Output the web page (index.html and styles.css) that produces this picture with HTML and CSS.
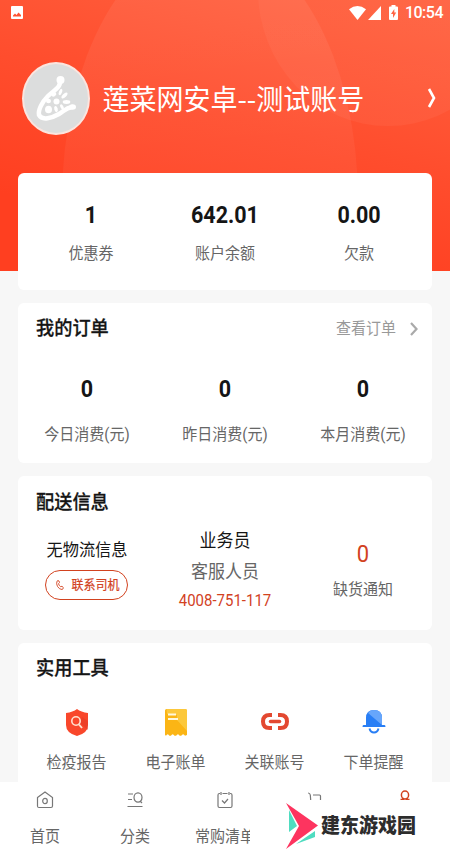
FILE: index.html
```html
<!DOCTYPE html>
<html lang="zh-CN">
<head>
<meta charset="utf-8">
<title>我的</title>
<link rel="stylesheet" href="styles.css">
</head>
<body>
<div class="app">
  <header class="hero">
    <svg class="hero-bg" viewBox="0 0 450 271" preserveAspectRatio="none">
      <defs>
        <linearGradient id="glow" x1="0" y1="0" x2="0" y2="1"><stop offset="0" stop-color="#fff" stop-opacity=".07"/><stop offset="1" stop-color="#fff" stop-opacity=".01"/></linearGradient>
        <linearGradient id="glow2" x1="0" y1="0" x2="0" y2="1"><stop offset="0" stop-color="#fff" stop-opacity=".02"/><stop offset="1" stop-color="#fff" stop-opacity=".045"/></linearGradient>
      </defs>
      <ellipse cx="210" cy="200" rx="148" ry="260" fill="url(#glow)"/>
      <ellipse cx="388" cy="-10" rx="130" ry="136" fill="url(#glow2)"/>
    </svg>
    <div class="status">
      <svg width="12" height="13" viewBox="0 0 12 13"><path fill="#fff" fill-rule="evenodd" d="M1 0h10q1 0 1 1v11q0 1-1 1H1q-1 0-1-1V1q0-1 1-1zM2 10.5h8V9L7.5 6.5 5.5 9 4 7.5 2 9.5z"/></svg>
      <div class="status-right">
        <svg width="17" height="14" viewBox="0 0 17 14"><path fill="#fff" d="M0 3.2Q8.500-3 17 3.200L8.500 14z"/></svg>
        <svg class="signal" width="13" height="14" viewBox="0 0 13 14"><path fill="#fff" d="M13 0v14H0z"/></svg>
        <svg class="battery" width="9" height="15" viewBox="0 0 9 15"><path fill="#fff" fill-rule="evenodd" d="M2.500 0h4v1.500H8q1 0 1 1V14q0 1-1 1H1q-1 0-1-1V2.500q0-1 1-1h1.500zM5.300 4L2 9h2v4l3.200-5.500H5.300z"/></svg>
        <span class="clock t">10:54</span>
      </div>
    </div>
    <div class="profile">
      <div class="avatar">
        <svg width="42" height="48" viewBox="0 0 42 48">
          <path fill="none" stroke="#fff" stroke-width="4.500" stroke-linecap="round" stroke-linejoin="round" d="M25 5C26 13 19 15 13 21 7 27 3 35 4 40c3 6 13 3 20-1 5-3 7-6 13-7"/>
          <g fill="#fff"><circle cx="25.500" cy="5" r="4"/><ellipse cx="37.500" cy="32" rx="3.500" ry="2.800"/>
          <ellipse cx="13.500" cy="34.500" rx="3.500" ry="3.800"/><ellipse cx="13.500" cy="26" rx="2.500" ry="2.300"/><ellipse cx="21.500" cy="26.500" rx="3" ry="2.900"/><ellipse cx="21" cy="34" rx="1.700" ry="3" transform="rotate(-15 21 34)"/><ellipse cx="27" cy="32" rx="1.500" ry="2.900" transform="rotate(-30 27 32)"/><ellipse cx="31.500" cy="27" rx="3.800" ry="1.900"/><ellipse cx="29.500" cy="20.500" rx="1.800" ry="3.800" transform="rotate(45 29.500 20.500)"/><ellipse cx="25.500" cy="17" rx="1.500" ry="3.300" transform="rotate(20 25.500 17)"/><ellipse cx="19" cy="19.500" rx="2.500" ry="1.800" transform="rotate(-35 19 19.500)"/></g>
        </svg>
      </div>
      <span class="name t">莲菜网安卓--测试账号</span>
      <svg class="more" width="9" height="20" viewBox="0 0 9 20" fill="none" stroke="#fff" stroke-width="2.600"><path d="M2 1L7 10 2 19"/></svg>
    </div>
  </header>

  <main class="cards">
    <section class="card balance">
      <div class="cell"><b class="num t">1</b><span class="label t">优惠券</span></div>
      <div class="cell"><b class="num t">642.01</b><span class="label t">账户余额</span></div>
      <div class="cell"><b class="num t">0.00</b><span class="label t">欠款</span></div>
    </section>

    <section class="card orders">
      <div class="head"><h2 class="t">我的订单</h2>
        <div class="link"><span class="t">查看订单</span><svg width="8" height="14" viewBox="0 0 8 14" fill="none" stroke="#aaa" stroke-width="2.200"><path d="M1 1l5.500 6L1 13"/></svg></div>
      </div>
      <div class="grid3">
        <div class="cell"><b class="num t">0</b><span class="label t">今日消费(元)</span></div>
        <div class="cell"><b class="num t">0</b><span class="label t">昨日消费(元)</span></div>
        <div class="cell"><b class="num t">0</b><span class="label t">本月消费(元)</span></div>
      </div>
    </section>

    <section class="card delivery">
      <div class="head"><h2 class="t">配送信息</h2></div>
      <div class="grid3">
        <div class="cell driver">
          <span class="info t">无物流信息</span>
          <div class="call"><svg width="8" height="10" viewBox="0 0 8 10" fill="none" stroke="#d2421f" stroke-width=".9"><path d="M1 1.200Q2 0 3 1l.5 1.500-1 1.200Q3 5.500 4.500 6.700L6 6.300 7.300 7.500Q7.500 9 6 9.500 3.500 9.500 1.500 6.500 0 3.500 1 1.200z"/></svg><span class="t">联系司机</span></div>
        </div>
        <div class="cell agent"><span class="role t">业务员</span><span class="service t">客服人员</span><span class="phone t">4008-751-117</span></div>
        <div class="cell lack"><span class="count t">0</span><span class="label t">缺货通知</span></div>
      </div>
    </section>

    <section class="card tools">
      <div class="head"><h2 class="t">实用工具</h2></div>
      <div class="grid4">
        <div class="tool"><svg width="22" height="27" viewBox="0 0 22 27"><path fill="#f9472b" d="M11 0Q15 3 22 4v12q0 8-11 11Q0 24 0 16V4q7-1 11-4z"/><path fill="#e23a25" d="M14 14l8 7v-9L16 8z" opacity=".5"/><circle cx="10" cy="12" r="4.200" fill="none" stroke="#ffe1d0" stroke-width="1.600"/><path d="M13 15.500l3 3.500" stroke="#ffe1d0" stroke-width="1.900"/></svg><span class="label t">检疫报告</span></div>
        <div class="tool"><svg width="22" height="27" viewBox="0 0 22 27"><path fill="#fbb515" d="M1.500 0h19q1.500 0 1.500 1.500V26l-2 .8q-1.800-3-3.800 0h-1.500q-1.700-3-3.600 0H9.500q-1.800-3-3.600 0H4.400q-1.700-3-3.400 0L0 26V1.500Q0 0 1.500 0z"/><path fill="#fdcd45" d="M1.500 0h19q1.500 0 1.500 1.500V22L12 11V6L2 5z" opacity=".8"/><path d="M3 5.500h8M3 10h10" stroke="#fff8dd" stroke-width="2"/></svg><span class="label t">电子账单</span></div>
        <div class="tool"><svg width="28" height="27" viewBox="0 0 28 27" fill="none" stroke="#e34830" stroke-width="4"><path d="M11 6H8.500Q2 6 2 12.500T8.500 19H11M17 6h2.500Q26 6 26 12.500T19.500 19H17"/><path d="M9.500 12.500h9" stroke-width="3.500" stroke-linecap="round"/></svg><span class="label t">关联账号</span></div>
        <div class="tool"><svg width="24" height="27" viewBox="0 0 24 27"><path fill="#287ef5" d="M4 16V9Q4 1 12 1t8 8v7h2.500q1 0 1 2H.500q0-2 1-2z"/><path fill="#67a6fb" d="M6 4q2-3 6-3 8 0 8 8v7z"/><path d="M7.500 19.500q1 4 4.500 4t4.500-4" fill="none" stroke="#287ef5" stroke-width="2"/></svg><span class="label t">下单提醒</span></div>
      </div>
    </section>
  </main>

  <nav class="tabs">
    <div class="tab"><svg width="16" height="18" viewBox="0 0 16 18"><path d="M.5 6.500L8 1l7.500 5.500V15q0 1.500-1.500 1.500H2Q.5 16.500.5 15z"/><ellipse cx="8" cy="10" rx="2.300" ry="2.700"/></svg><span class="label t">首页</span></div>
    <div class="tab"><svg width="16" height="18" viewBox="0 0 16 18"><path d="M1 3h5M1 8.500h4M.5 15.500h15M13 10l2 2"/><ellipse cx="11" cy="6.500" rx="4" ry="4.700"/></svg><span class="label t">分类</span></div>
    <div class="tab"><svg width="16" height="18" viewBox="0 0 16 18"><path d="M5.500 2.500h5M3 2.500H2.500Q1 2.500 1 4v11q0 1.500 1.500 1.500h11Q15 16.500 15 15V4q0-1.500-1.500-1.500H13M4 1v3M12 1v3M5 9.500l2.500 2.500L11 8"/></svg><span class="label t">常购清单</span></div>
    <div class="tab cart"><svg width="16" height="18" viewBox="0 0 16 18"><path d="M1 2q2 0 2.300 2L4 13h9.500V5q0-1-1-1H6"/></svg></div>
    <div class="tab active"><svg width="16" height="18" viewBox="0 0 16 18"><path d="M3.500 8.500h3L5.500 7M12.500 8.500h-3L10.500 7"/><ellipse cx="8" cy="4" rx="3.600" ry="4"/></svg></div>
    <div class="stamp">
      <svg width="34" height="46" viewBox="0 0 34 46"><path fill="#4fdcc0" d="M3 7v22l8-6zM10 41l19-13v6z"/><path fill="#fd345f" d="M0 0l32 22.500L0 46l13-23z"/></svg>
      <span class="t">建东游戏园</span>
    </div>
  </nav>
</div>
</body>
</html>
```

FILE: styles.css
```css
* { box-sizing: border-box; }
body { margin: 0; background: #f7f7f7; font-family: Roboto, "Noto Sans CJK SC", sans-serif; color: #151515; }
svg { display: block; flex: none; }
.app { width: 450px; height: 850px; overflow: hidden; display: flex; flex-direction: column; }
/* Type is slightly taller than its natural proportions. */
.t { display: inline-block; transform: scaleY(1.07); white-space: nowrap; }

.hero { position: relative; height: 271px; flex: none; background: linear-gradient(15deg, #ff3f20 20%, #ff4d2d 55%, #ff6341 100%); color: #fff; }
.hero-bg { position: absolute; inset: 0; width: 450px; height: 271px; }
.status { position: relative; display: flex; justify-content: space-between; align-items: center; height: 25px; padding: 0 7px 0 11px; }
.status-right { display: flex; align-items: center; }
.signal { margin-left: 2px; }
.battery { margin: 0 7px 0 8px; }
.clock { font-size: 16px; line-height: 24px; font-weight: 500; letter-spacing: -.5px; }
.profile { position: relative; display: flex; align-items: center; height: 73px; margin-top: 37px; padding: 0 14px 0 22px; }
.avatar { width: 68px; height: 73px; flex: none; border-radius: 50%; border: 2px solid #fbe5df; background: #dcdddd; display: flex; align-items: center; justify-content: center; }
.name { font-family: "Noto Sans CJK SC", sans-serif; font-size: 27px; line-height: 40px; margin: -2px 0 0 12.5px; }
.more { margin: -2px 0 0 auto; }

.cards { position: relative; margin-top: -98px; padding: 0 18px; height: 609px; overflow: hidden; flex: none; display: flex; flex-direction: column; gap: 13px; }
.card { background: #fff; border-radius: 6px; flex: none; }
.cell { display: flex; flex-direction: column; align-items: center; }
.num { font-size: 21.5px; line-height: 28px; font-weight: 700; transform: scaleY(1.1); }
.label { font-size: 15px; line-height: 22px; color: #666; }
.balance { height: 117px; padding: 28px 6px 0; display: grid; grid-template-columns: repeat(3, 1fr); }
.balance .label { margin-top: 14px; }
.orders { height: 160px; }
.head { display: flex; justify-content: space-between; align-items: center; height: 52px; padding: 0 14px 0 18px; }
h2 { margin: 0; font-size: 18.2px; line-height: 26px; font-weight: 500; -webkit-text-stroke: .25px currentColor; }
.link { display: flex; align-items: center; gap: 14px; font-size: 15px; line-height: 22px; color: #999; }
.grid3 { display: grid; grid-template-columns: repeat(3, 1fr); }
.orders .grid3 { padding-top: 20px; }
.orders .label { margin-top: 21px; }
.delivery { height: 154px; }
.delivery .head { height: 53px; }
.driver { padding-top: 10px; }
.info { font-size: 16.2px; line-height: 24px; }
.call { width: 83px; height: 30px; margin: 7px 1px 0 0; border: 1.500px solid #d2421f; border-radius: 15px; display: flex; align-items: center; justify-content: center; gap: 7px; color: #d2421f; font-size: 12px; line-height: 18px; padding-left: 3px; }
.call .t { -webkit-text-stroke: .2px currentColor; }
.role { font-size: 17px; line-height: 26px; }
.service { font-size: 17px; line-height: 26px; margin-top: 5px; color: #666; }
.agent { margin-top: -1px; }
.phone { font-size: 15px; line-height: 22px; margin-top: 5px; color: #d2421f; }
.lack { padding-top: 12px; }
.count { font-size: 22px; line-height: 28px; color: #d2421f; }
.lack .label { margin-top: 10px; }
.tools { height: 146px; }
.grid4 { display: grid; grid-template-columns: repeat(4, 99px); padding: 14px 9px 0; }
.tool { display: flex; flex-direction: column; align-items: center; }
.tool .label { margin-top: 16px; }

.tabs { position: relative; height: 68px; flex: none; background: #fff; display: grid; grid-template-columns: repeat(5, 90px); }
.tab { display: flex; flex-direction: column; align-items: center; padding-top: 9px; }
.tab svg { fill: none; stroke: #777; stroke-width: 1.200; overflow: visible; }
.tab.active svg { stroke: #d2421f; stroke-width: 1.500; }
.tab .label { margin-top: 17px; }
.stamp { position: absolute; left: 250px; top: 18px; width: 200px; height: 50px; background: #fff; padding: 2px 0 0 36px; display: flex; align-items: center; font-size: 19px; line-height: 26px; font-weight: 900; color: #2d2d2d; }
.stamp .t { margin: 2px 0 0 1px; }
```
